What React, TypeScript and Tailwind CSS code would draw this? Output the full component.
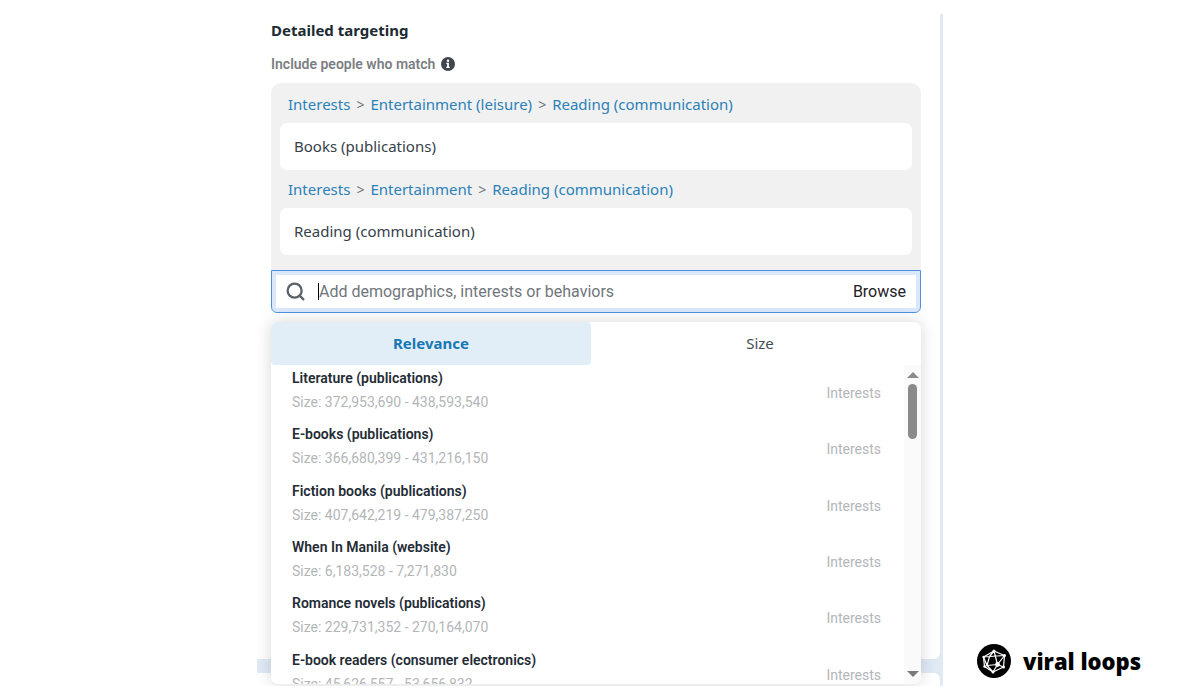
import { Search } from 'lucide-react'

interface Suggestion {
  name: string
  size: string
  type: string
}

interface Selection {
  path: string[]
  name: string
}

const selections: Selection[] = [
  { path: ['Interests', 'Entertainment (leisure)', 'Reading (communication)'], name: 'Books (publications)' },
  { path: ['Interests', 'Entertainment', 'Reading (communication)'], name: 'Reading (communication)' },
]

const suggestions: Suggestion[] = [
  { name: 'Literature (publications)', size: '372,953,690 - 438,593,540', type: 'Interests' },
  { name: 'E-books (publications)', size: '366,680,399 - 431,216,150', type: 'Interests' },
  { name: 'Fiction books (publications)', size: '407,642,219 - 479,387,250', type: 'Interests' },
  { name: 'When In Manila (website)', size: '6,183,528 - 7,271,830', type: 'Interests' },
  { name: 'Romance novels (publications)', size: '229,731,352 - 270,164,070', type: 'Interests' },
  { name: 'E-book readers (consumer electronics)', size: '45,626,557 - 53,656,832', type: 'Interests' },
]

function InfoIcon() {
  return (
    <svg viewBox="0 0 14 14" className="h-[14px] w-[14px]" aria-hidden="true">
      <circle cx="7" cy="7" r="7" fill="#40464d" />
      <path d="M5.3 5.8h2.6v4h.9v1.2H5.2V9.8h.9V7h-.8z" fill="#fff" />
      <circle cx="7" cy="3.7" r="1.2" fill="#fff" />
    </svg>
  )
}

function SelectedInterest({ path, name }: Selection) {
  return (
    <div>
      <nav className="flex h-[38px] items-center gap-[6px] px-2 text-[#2b81b8]">
        {path.map((part, i) => (
          <span key={part} className="flex items-center gap-[6px]">
            {i > 0 && <span className="text-[14px] text-[#6b7278]">&gt;</span>}
            <a href="#">{part}</a>
          </span>
        ))}
      </nav>
      <div className="flex h-[47px] items-center rounded-[7px] bg-white px-[14px] text-[#364149]">{name}</div>
    </div>
  )
}

function SearchBox() {
  return (
    <div className="flex h-[43px] items-center rounded-b-[6px] border border-[#4f8fe0] bg-white pr-[14px] pl-[13px] font-[Roboto,sans-serif] text-[16px] shadow-[inset_0_0_0_4px_#dbe8fa]">
      <Search size={21} strokeWidth={2.6} className="mr-3 text-[#5b6268]" />
      <span className="h-[17px] w-px bg-black" />
      <input
        type="text"
        aria-label="Add demographics, interests or behaviors"
        placeholder="Add demographics, interests or behaviors"
        className="min-w-0 flex-1 bg-transparent outline-none placeholder:text-[#70767c]"
      />
      <button className="text-[#1d2126]">Browse</button>
    </div>
  )
}

function Scrollbar() {
  return (
    <div className="flex w-[17px] flex-col items-center bg-[#fafafa] py-[7px]">
      <svg viewBox="0 0 12 6" className="h-[6px] w-3"><path d="M6 0l6 6H0z" fill="#8a8a8a" /></svg>
      <div className="mt-[6px] h-[55px] w-[9px] rounded-full bg-[#8a8a8a]" />
      <svg viewBox="0 0 12 6" className="mt-auto h-[6px] w-3"><path d="M0 0h12L6 6z" fill="#7a7a7a" /></svg>
    </div>
  )
}

function SuggestionMenu() {
  return (
    <div className="absolute inset-x-0 top-full mt-[9px] overflow-hidden rounded-[7px] bg-white shadow-[0_0_16px_rgba(0,0,0,0.16)]">
      <div className="flex h-[43px]">
        <button className="w-80 rounded-[4px] bg-[#e1eef7] font-bold text-[#1877b5]">Relevance</button>
        <button className="flex-1 pl-2 text-[#444d54]">Size</button>
      </div>
      <div className="flex h-[319px] overflow-hidden">
        <ul className="grid h-[339px] flex-1 grid-rows-6 pt-px pr-[23px] pl-[21px] font-[Roboto,sans-serif] text-[14px]">
          {suggestions.map(item => (
            <li key={item.name} className="flex items-start justify-between">
              <div className="leading-6">
                <p className="font-semibold text-[#242c35]">{item.name}</p>
                <p className="text-[#b3b6b9]">Size: {item.size}</p>
              </div>
              <span className="leading-[54px] text-[#b3b6b9]">{item.type}</span>
            </li>
          ))}
        </ul>
        <Scrollbar />
      </div>
    </div>
  )
}

function TargetingPanel() {
  return (
    <div className="overflow-hidden bg-[#dfeaf5] pr-[3px]">
      <section className="min-h-[645px] rounded-br-[6px] bg-white pt-1 pr-[19px] pl-[14px]">
        <h1 className="leading-6 font-bold text-[#1c2b33]">Detailed targeting</h1>
        <div className="mt-[10px] flex h-6 items-center gap-[6px]">
          <h2 className="font-[Roboto,sans-serif] text-[14px] font-semibold text-[#7b7f83]">Include people who match</h2>
          <InfoIcon />
        </div>
        <div className="mt-[7px] rounded-t-[10px] bg-[#f1f1f1] px-[9px] pt-[2px] pb-[15px]">
          {selections.map(s => <SelectedInterest key={s.name} {...s} />)}
        </div>
        <div className="relative">
          <SearchBox />
          <SuggestionMenu />
        </div>
      </section>
      <section className="mt-[14px] h-[13px] rounded-tr-[6px] bg-white" />
    </div>
  )
}

function Brand() {
  return (
    <div className="flex items-center gap-3">
      <svg viewBox="0 0 34 34" className="h-[34px] w-[34px]" aria-hidden="true">
        <circle cx="17" cy="17" r="17" />
        <g fill="none" stroke="#fff" strokeWidth="1.2" strokeLinejoin="round">
          <path d="M17 7L27.5 11.5L26.5 23L16 28L7.5 22.5L6.5 13z" />
          <path d="M17 7L12.5 12.5L6.5 13L10 21.5L7.5 22.5M12.5 12.5L10 21.5L16 28L20.5 20.5L10 21.5M17 7L20.5 20.5L27.5 11.5M12.5 12.5L27.5 11.5M20.5 20.5L26.5 23" />
        </g>
        <g fill="#fff">
          <circle cx="17" cy="7" r="1.5" />
          <circle cx="27.5" cy="11.5" r="1.5" />
          <circle cx="26.5" cy="23" r="1.5" />
          <circle cx="16" cy="28" r="1.5" />
          <circle cx="7.5" cy="22.5" r="1.2" />
          <circle cx="6.5" cy="13" r="1.2" />
          <circle cx="20.5" cy="20.5" r="2.4" />
        </g>
      </svg>
      <span className="font-['Open_Sans',sans-serif] text-[22px] leading-7 font-extrabold whitespace-nowrap text-black">viral loops</span>
    </div>
  )
}

export default function App() {
  return (
    <main className="grid grid-cols-[1fr_minmax(0,686px)_1fr] bg-white py-[14px] font-['Noto_Sans',sans-serif] text-[15px]">
      <div className="col-start-2">
        <TargetingPanel />
      </div>
      <div className="self-end pb-2 pl-[34px]">
        <Brand />
      </div>
    </main>
  )
}
